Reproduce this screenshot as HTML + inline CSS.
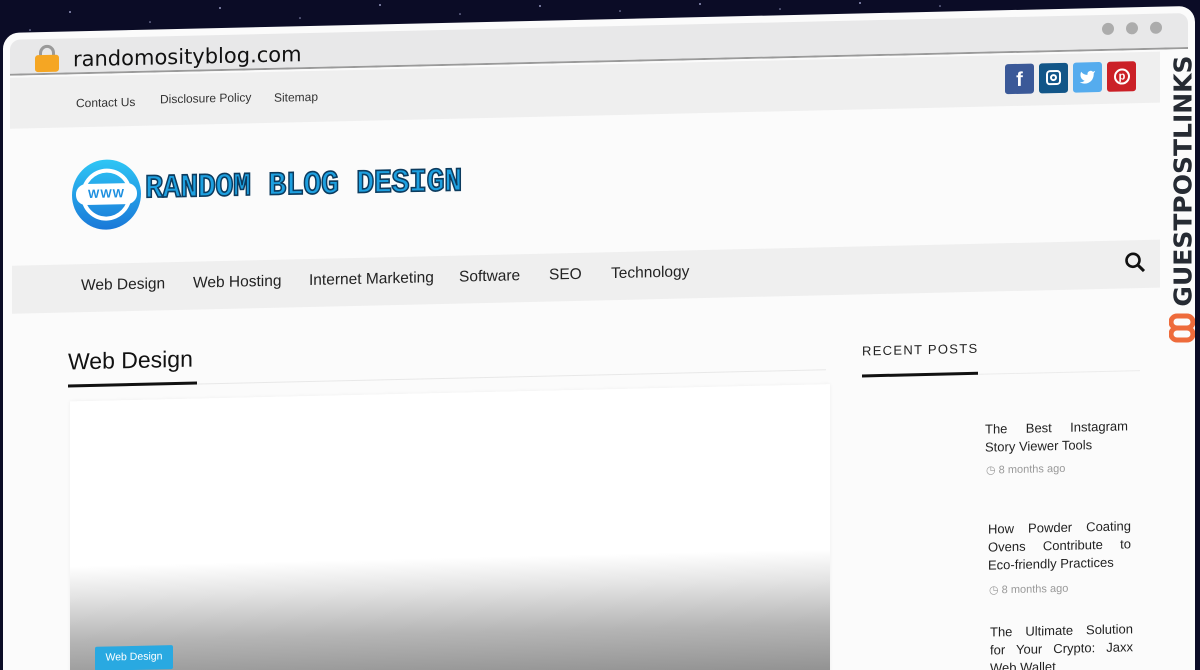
<!DOCTYPE html>
<html><head><meta charset="utf-8"><style>
*{margin:0;padding:0;box-sizing:border-box}
html,body{width:1200px;height:670px;overflow:hidden;background:#0b0c26;font-family:"Liberation Sans",sans-serif}
#clip{position:fixed;left:0;top:0;width:1200px;height:670px;overflow:hidden}
.stars{position:absolute;left:0;top:0;width:1200px;height:60px}
#w{position:absolute;left:0;top:0;width:1200px;height:700px;transform:skewY(-1.3deg);transform-origin:0 0}
.a{position:absolute;white-space:nowrap}
</style></head><body><div id="clip">
<svg class="stars" width="1200" height="60"><g fill="#cfd3ff" opacity=".7">
<circle cx="70" cy="12" r="1"/><circle cx="150" cy="22" r=".8"/><circle cx="220" cy="8" r="1"/><circle cx="300" cy="18" r=".8"/><circle cx="380" cy="5" r="1"/><circle cx="460" cy="14" r=".8"/><circle cx="540" cy="6" r="1"/><circle cx="620" cy="11" r=".8"/><circle cx="700" cy="4" r="1"/><circle cx="780" cy="9" r=".8"/><circle cx="860" cy="3" r="1"/><circle cx="940" cy="6" r=".8"/><circle cx="30" cy="30" r=".8"/><circle cx="110" cy="35" r=".8"/><circle cx="260" cy="28" r=".8"/></g></svg>
<div id="w">
<div class="a" style="left:3px;top:33px;width:1192px;height:667px;background:#fbfbfb;border-radius:16px 16px 0 0"></div>
<div class="a" style="left:10px;top:40px;width:1178px;height:36px;background:#e8e8e9;border-radius:10px 10px 0 0;border-bottom:2px solid #9a9a9a"></div>
<div class="a" style="left:35px;top:46px;width:24px;height:28px">
<div style="position:absolute;left:4px;top:0;width:16px;height:16px;border:3px solid #9a9a9a;border-radius:8px 8px 0 0"></div>
<div style="position:absolute;left:0;top:10px;width:24px;height:17px;background:#f5a623;border-radius:3px"></div></div>
<div class="a" style="left:73px;top:49px;font-family:'DejaVu Sans',sans-serif;font-size:21px;color:#111">randomosityblog.com</div>
<div class="a" style="left:1102px;top:48px;width:12px;height:12px;border-radius:6px;background:#acacac"></div>
<div class="a" style="left:1126px;top:48px;width:12px;height:12px;border-radius:6px;background:#acacac"></div>
<div class="a" style="left:1150px;top:48px;width:12px;height:12px;border-radius:6px;background:#acacac"></div>
<div class="a" style="left:10px;top:78px;width:1150px;height:51px;background:#efefef"></div>
<div class="a" style="left:76px;top:98px;font-size:12px;color:#333">Contact Us</div>
<div class="a" style="left:160px;top:96px;font-size:12px;color:#333">Disclosure Policy</div>
<div class="a" style="left:274px;top:97px;font-size:12px;color:#333">Sitemap</div>
<div class="a" style="left:1005px;top:87px;width:29px;height:30px;background:#3b5998;border-radius:3px;color:#fff;font:bold 20px 'Liberation Sans';text-align:center;line-height:32px">f</div>
<div class="a" style="left:1039px;top:87px;width:29px;height:30px;background:#125688;border-radius:3px"><div style="margin:7px;width:15px;height:15px;border:2px solid #fff;border-radius:4px;position:relative"><div style="position:absolute;left:2px;top:2px;width:7px;height:7px;border:2px solid #fff;border-radius:50%"></div></div></div>
<div class="a" style="left:1073px;top:87px;width:29px;height:30px;background:#55acee;border-radius:3px"><svg width="29" height="30" viewBox="0 0 24 24"><path transform="translate(5 5) scale(.58)" fill="#fff" d="M23 3a10.9 10.9 0 0 1-3.1 1.5 4.5 4.5 0 0 0-7.9 3v1A10.7 10.7 0 0 1 3 4s-4 9 5 13a11.6 11.6 0 0 1-7 2c9 5 20 0 20-11.5 0-.3 0-.6-.1-.8A7.7 7.7 0 0 0 23 3z"/></svg></div>
<div class="a" style="left:1107px;top:87px;width:29px;height:30px;background:#cb2027;border-radius:3px"><div style="margin:7px;width:16px;height:16px;border:2px solid #fff;border-radius:50%;color:#fff;font:bold 11px 'Liberation Sans';text-align:center;line-height:12px">p</div></div>
<div class="a" style="left:72px;top:162px;width:69px;height:70px;border-radius:50%;background:linear-gradient(#2ec6f5,#1a78d8)"><div style="position:absolute;left:9px;top:9px;width:51px;height:52px;border-radius:50%;border:4px solid #fff"></div><div style="position:absolute;left:4px;top:24px;width:61px;height:21px;background:#fff;border-radius:10px;color:#1c8fe0;font:bold 12px 'Liberation Sans';text-align:center;line-height:21px;letter-spacing:1px">WWW</div></div>
<div class="a" style="left:145px;top:176px;font:bold 30px 'Liberation Mono',monospace;color:#1ea0e0;-webkit-text-stroke:1.5px #0c3b5e;letter-spacing:-0.4px;transform:scaleY(1.1)">RANDOM BLOG DESIGN</div>
<div class="a" style="left:12px;top:266px;width:1148px;height:48px;background:#efefef"></div>
<div class="a" style="left:81px;top:279px;font-size:15.5px;color:#222">Web Design</div>
<div class="a" style="left:193px;top:279px;font-size:15.5px;color:#222">Web Hosting</div>
<div class="a" style="left:309px;top:279px;font-size:15.5px;color:#222">Internet Marketing</div>
<div class="a" style="left:459px;top:279px;font-size:15.5px;color:#222">Software</div>
<div class="a" style="left:549px;top:279px;font-size:15.5px;color:#222">SEO</div>
<div class="a" style="left:611px;top:279px;font-size:15.5px;color:#222">Technology</div>
<svg class="a" style="left:1124px;top:277px" width="24" height="22"><circle cx="9" cy="9" r="6.5" fill="none" stroke="#111" stroke-width="2.6"/><line x1="14" y1="14" x2="20" y2="20" stroke="#111" stroke-width="3"/></svg>
<div class="a" style="left:68px;top:350px;font-size:23px;color:#111">Web Design</div>
<div class="a" style="left:68px;top:388px;width:758px;height:1px;background:#e8e8e8"></div>
<div class="a" style="left:68px;top:386px;width:129px;height:3px;background:#111"></div>
<div class="a" style="left:70px;top:403px;width:760px;height:297px;background:linear-gradient(#fff 0,#fff 165px,#e4e4e4 195px,#b5b5b5 240px,#8a8a8a 297px);box-shadow:0 0 3px #eee"></div>
<div class="a" style="left:95px;top:649px;width:78px;height:24px;background:#29a9e1;border-radius:2px;color:#fff;font-size:10.5px;text-align:center;line-height:22px">Web Design</div>
<div class="a" style="left:862px;top:363px;font-size:13px;letter-spacing:1.3px;color:#222">RECENT POSTS</div>
<div class="a" style="left:862px;top:396px;width:278px;height:1px;background:#ececec"></div>
<div class="a" style="left:862px;top:394px;width:116px;height:3px;background:#111"></div>
<div class="a" style="left:985px;top:443px;width:143px;font-size:13px;line-height:18px;color:#222;white-space:normal;text-align:justify;text-align-last:left">The Best Instagram Story Viewer Tools</div>
<div class="a" style="left:986px;top:486px;font-size:11px;color:#999">◷ 8 months ago</div>
<div class="a" style="left:988px;top:543px;width:143px;font-size:13px;line-height:18px;color:#222;white-space:normal;text-align:justify;text-align-last:left">How Powder Coating Ovens Contribute to Eco-friendly Practices</div>
<div class="a" style="left:989px;top:606px;font-size:11px;color:#999">◷ 8 months ago</div>
<div class="a" style="left:990px;top:646px;width:143px;font-size:13px;line-height:18px;color:#222;white-space:normal;text-align:justify;text-align-last:left">The Ultimate Solution for Your Crypto: Jaxx Web Wallet</div>
</div>
<div class="a" style="left:1166px;top:56px;width:34px;height:250px"><div style="position:absolute;left:50%;top:50%;transform:translate(-50%,-50%) rotate(-90deg);font:bold 25px 'DejaVu Sans',sans-serif;color:#262b33;white-space:nowrap">GUESTPOSTLINKS</div></div>
<svg class="a" style="left:1169px;top:304px" width="26" height="48"><g fill="none" stroke="#ee6b3b" stroke-width="5"><path d="M13 24 H8 a6 6 0 0 1 0-12 h10 a6 6 0 0 1 0 12"/><path d="M13 24 h5 a6 6 0 0 1 0 12 H8 a6 6 0 0 1 0-12"/></g></svg>
</div></body></html>
